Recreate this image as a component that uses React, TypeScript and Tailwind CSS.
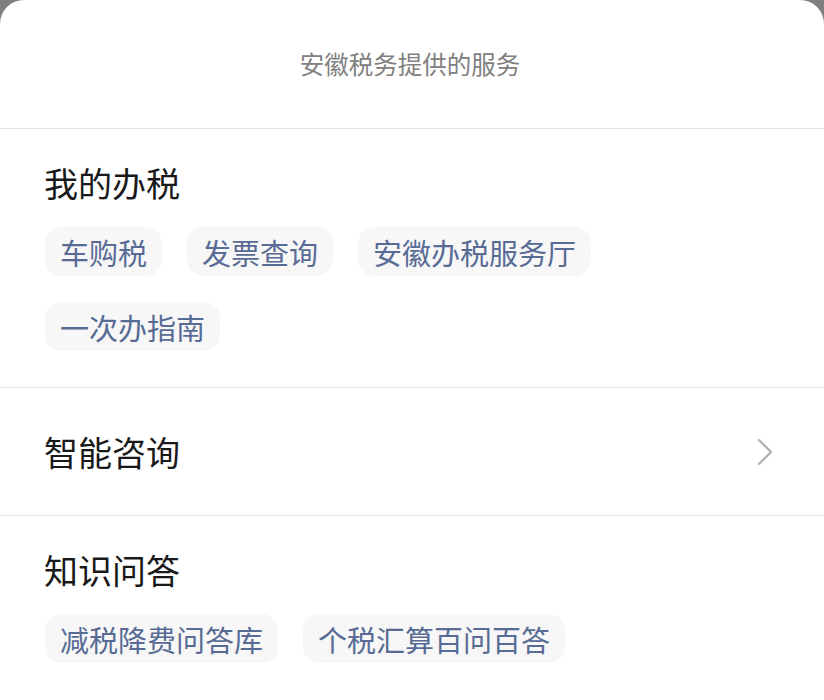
import React from 'react';

const sections = [
  { title: '我的办税', chips: ['车购税', '发票查询', '安徽办税服务厅', '一次办指南'] },
  { title: '智能咨询', link: true },
  { title: '知识问答', chips: ['减税降费问答库', '个税汇算百问百答'] },
];

const Chevron: React.FC = () => (
  <svg width="18" height="28" viewBox="0 0 18 28" fill="none">
    <path d="M3 2 L15 14 L3 26" stroke="#b2b2b2" strokeWidth="2.4" strokeLinecap="round" strokeLinejoin="round" />
  </svg>
);

const App: React.FC = () => {
  return (
    <div className="min-h-[700px] bg-[#7f7f7f] font-['Noto_Sans_CJK_SC','Noto_Sans',sans-serif]">
      <div className="min-h-[700px] bg-white rounded-t-[24px] overflow-hidden">
        {/* header */}
        <div className="h-[129px] flex items-center justify-center border-b border-[#e5e5e5]">
          <span className="text-[24.5px] leading-[32px] text-[#808080] -ml-[4px]">安徽税务提供的服务</span>
        </div>

        {sections.map((s, i) =>
          s.link ? (
            <div key={i} className="h-[128px] px-[45px] pr-[50px] flex items-center justify-between border-b border-[#e5e5e5]">
              <span className="text-[34px] leading-[40px] text-[#191919] -ml-[1px]">{s.title}</span>
              <Chevron />
            </div>
          ) : (
            <div key={i} className={`px-[45px] pt-[34px] ${i === sections.length - 1 ? 'pb-[40px]' : 'pb-[36px] border-b border-[#e5e5e5]'}`}>
              <div className="text-[34px] leading-[40px] text-[#191919] -ml-[1px]">{s.title}</div>
              <div className="mt-[24px] flex flex-wrap gap-x-[25px] gap-y-[26px]">
                {s.chips!.map((c) => (
                  <div key={c} className="h-[49px] px-[15px] flex items-center rounded-[16px] bg-[#f7f7f7] text-[29px] leading-[36px] text-[#576b95]">
                    {c}
                  </div>
                ))}
              </div>
            </div>
          )
        )}
      </div>
    </div>
  );
};

export default App;
